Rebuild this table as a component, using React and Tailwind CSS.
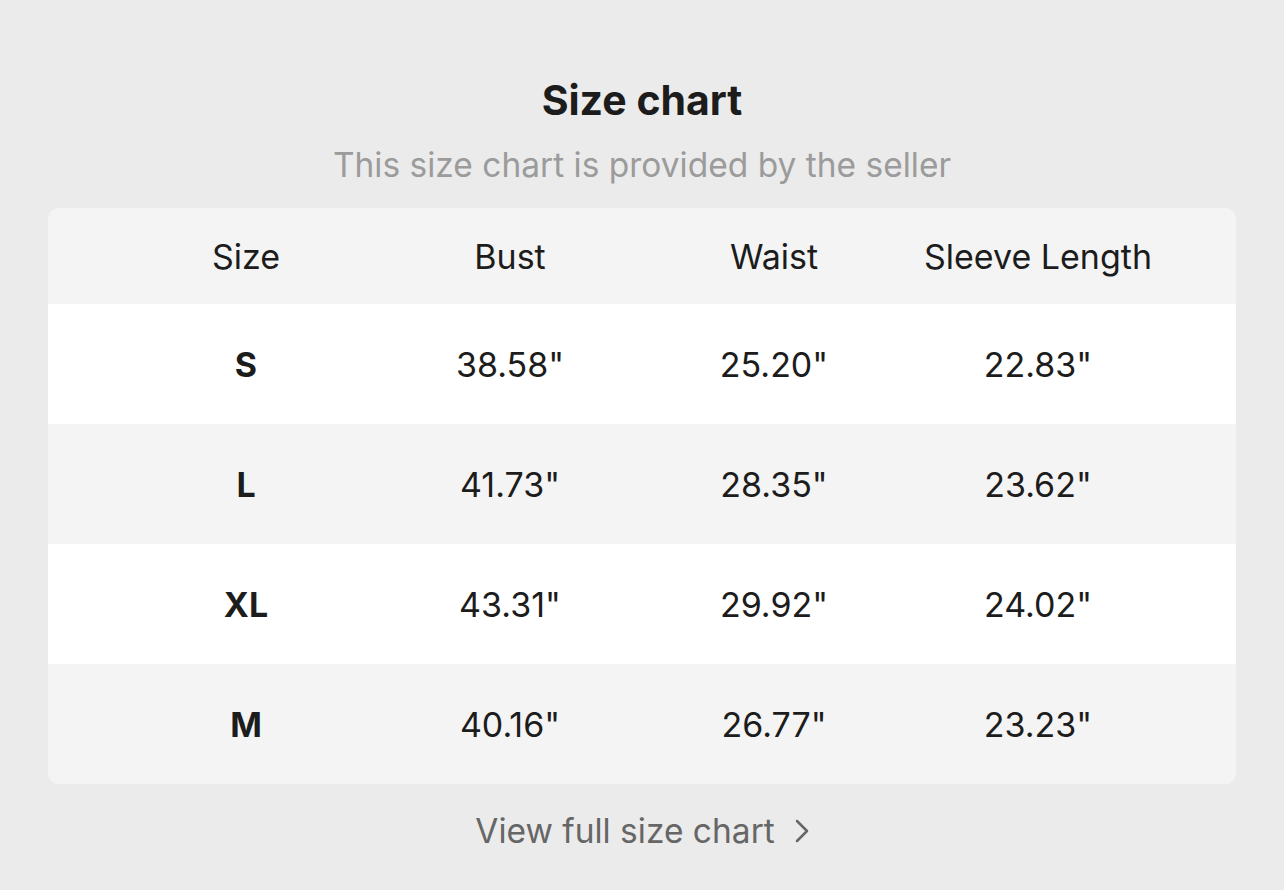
import React from "react";

const rows = [
  ["S", "38.58\"", "25.20\"", "22.83\""],
  ["L", "41.73\"", "28.35\"", "23.62\""],
  ["XL", "43.31\"", "29.92\"", "24.02\""],
  ["M", "40.16\"", "26.77\"", "23.23\""],
];

export default function App() {
  return (
    <div
      className="w-[1284px] h-[890px] bg-[#ebebeb] flex flex-col items-center pt-[76px] text-[#1c1c1c]"
      style={{ fontFamily: "Inter, 'Open Sans', sans-serif" }}
    >
      <h1 className="text-[41px] leading-[48px] font-bold">Size chart</h1>
      <p className="mt-[21px] text-[33.5px] leading-[40px] text-[#9b9b9b]">
        This size chart is provided by the seller
      </p>
      <div className="mt-[23px] w-[1188px] rounded-[12px] overflow-hidden bg-white">
        <div className="h-[96px] bg-[#f4f4f4] px-[66px] grid grid-cols-4 items-center text-[34px]">
          <div className="text-center">Size</div>
          <div className="text-center">Bust</div>
          <div className="text-center">Waist</div>
          <div className="text-center">Sleeve Length</div>
        </div>
        {rows.map((r, i) => (
          <div
            key={i}
            className={`h-[120px] px-[66px] grid grid-cols-4 items-center text-[34px] ${
              i % 2 === 0 ? "bg-white" : "bg-[#f4f4f4]"
            }`}
          >
            <div className="text-center font-bold">{r[0]}</div>
            <div className="text-center">{r[1]}</div>
            <div className="text-center">{r[2]}</div>
            <div className="text-center">{r[3]}</div>
          </div>
        ))}
      </div>
      <div className="mt-[27px] flex items-center gap-[20px] text-[33.5px] leading-[40px] text-[#666666]">
        <span>View full size chart</span>
        <svg width="14" height="24" viewBox="0 0 14 24" fill="none">
          <path d="M2 2 L12 12 L2 22" stroke="#666666" strokeWidth="2.5" strokeLinecap="round" strokeLinejoin="round" />
        </svg>
      </div>
    </div>
  );
}
